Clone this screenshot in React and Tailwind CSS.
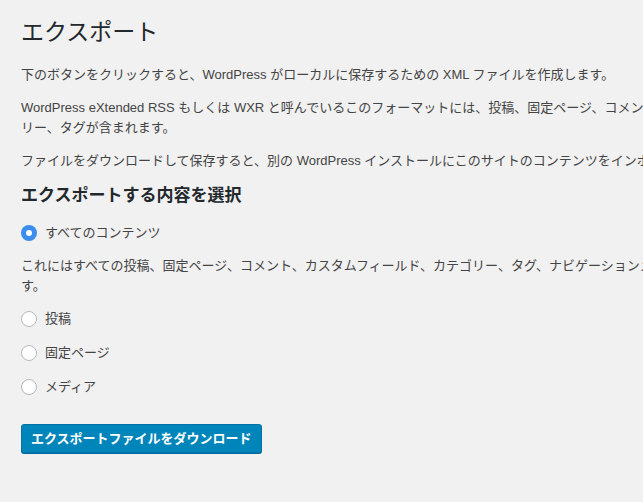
export default function App() {
  const font = { fontFamily: '"Liberation Sans", "Noto Sans CJK JP", sans-serif' };
  const Radio = ({ checked, label }) => (
    <label className="flex items-center h-[20px]">
      {checked ? (
        <span className="w-[16px] h-[16px] rounded-full bg-[#3b8df0] flex items-center justify-center mr-[8px]">
          <span className="w-[6px] h-[6px] rounded-full bg-white" />
        </span>
      ) : (
        <span className="w-[16px] h-[16px] rounded-full bg-white border border-[#b4b9be] mr-[8px]" />
      )}
      <span className="text-[13px] text-[#444]">{label}</span>
    </label>
  );
  return (
    <div className="w-[643px] h-[502px] overflow-hidden bg-[#f1f1f1]" style={font}>
      <div className="w-[846px] pl-[21px] pt-[18px]">
        <h1 className="text-[23px] leading-[29px] text-[#23282d] font-normal">エクスポート</h1>
        <p className="mt-[18px] text-[13px] leading-[20px] text-[#444]">
          下のボタンをクリックすると、WordPress がローカルに保存するための XML ファイルを作成します。
        </p>
        <p className="mt-[13px] text-[13px] leading-[20px] text-[#444]">
          WordPress eXtended RSS もしくは WXR と呼んでいるこのフォーマットには、投稿、固定ページ、コメント、カスタムフィールド、カテゴリー、タグが含まれます。
        </p>
        <p className="mt-[13px] text-[13px] leading-[20px] text-[#444]">
          ファイルをダウンロードして保存すると、別の WordPress インストールにこのサイトのコンテンツをインポートすることができます。
        </p>
        <h2 className="mt-[14px] text-[17px] leading-[22px] font-bold text-[#23282d]">エクスポートする内容を選択</h2>
        <div className="mt-[16px]">
          <Radio checked label="すべてのコンテンツ" />
        </div>
        <p className="mt-[13px] w-[832px] text-[13px] leading-[20px] text-[#444]">
          これにはすべての投稿、固定ページ、コメント、カスタムフィールド、カテゴリー、タグ、ナビゲーションメニュー、カスタム投稿が含まれます。
        </p>
        <div className="mt-[13px] flex flex-col gap-[14px]">
          <Radio label="投稿" />
          <Radio label="固定ページ" />
          <Radio label="メディア" />
        </div>
        <button className="mt-[27px] h-[29px] px-[9px] rounded-[3px] bg-[#0085ba] border border-[#0073aa] shadow-[0_1px_0_#006799] text-white text-[13px] font-bold">
          エクスポートファイルをダウンロード
        </button>
      </div>
    </div>
  );
}
